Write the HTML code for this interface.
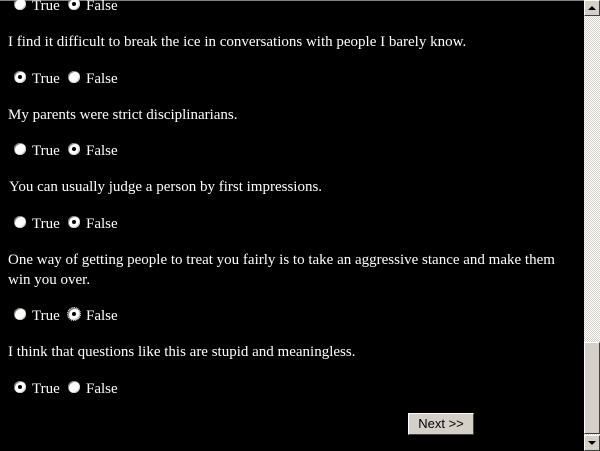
<html><head><style>
body{margin:0;background:#000;width:600px;height:451px;overflow:hidden;position:relative;font-family:"Liberation Serif",serif;font-size:15px;color:#fff}
.t{position:absolute;left:8px;white-space:nowrap;line-height:20px}
.r{position:absolute;width:12px;height:12px;border-radius:50%;background:#fff;box-shadow:inset 1px 1px 0 #808080,inset -1px -1px 0 #d4d0c8}
.r.c::after{content:"";position:absolute;left:4px;top:4px;width:4px;height:4px;border-radius:50%;background:#000}
.l{position:absolute;line-height:16px}
#sb{position:absolute;left:584px;top:0;width:16px;height:451px;background:repeating-conic-gradient(#fff 0 25%,#d4d0c8 0 50%) 0 0/2px 2px}
.btn{position:absolute;background:#d4d0c8;border:1px solid;border-color:#fff #404040 #404040 #fff;box-sizing:border-box}
</style></head><body>
<div style="position:absolute;left:0;top:0;width:584px;height:1px;background:#808080"></div>
<div id="sb">
<div class="btn" style="left:0;top:0;width:16px;height:16px"><div style="position:absolute;left:3px;top:5px;border:4px solid transparent;border-bottom:4px solid #000;border-top:0;width:0"></div></div>
<div class="btn" style="left:0;top:342px;width:16px;height:92px"></div>
<div class="btn" style="left:0;top:435px;width:16px;height:16px"><div style="position:absolute;left:3px;top:5px;border:4px solid transparent;border-top:4px solid #000;border-bottom:0;width:0"></div></div>
</div>

<div class="r" style="left:14px;top:-2px"></div><div class="l" style="left:32px;top:-2px">True</div>
<div class="r c" style="left:68px;top:-2px"></div><div class="l" style="left:86px;top:-2px">False</div>

<div class="t" style="top:32px">I find it difficult to break the ice in conversations with people I barely know.</div>
<div class="r c" style="left:14px;top:71px"></div><div class="l" style="left:32px;top:71px">True</div>
<div class="r" style="left:68px;top:71px"></div><div class="l" style="left:86px;top:71px">False</div>

<div class="t" style="top:105px">My parents were strict disciplinarians.</div>
<div class="r" style="left:14px;top:143px"></div><div class="l" style="left:32px;top:143px">True</div>
<div class="r c" style="left:68px;top:143px"></div><div class="l" style="left:86px;top:143px">False</div>

<div class="t" style="top:177px;left:9px">You can usually judge a person by first impressions.</div>
<div class="r" style="left:14px;top:216px"></div><div class="l" style="left:32px;top:216px">True</div>
<div class="r c" style="left:68px;top:216px"></div><div class="l" style="left:86px;top:216px">False</div>

<div class="t" style="top:250px">One way of getting people to treat you fairly is to take an aggressive stance and make them<br>win you over.</div>
<div class="r" style="left:14px;top:308px"></div><div class="l" style="left:32px;top:308px">True</div>
<div class="r c" style="left:68px;top:308px;outline:1px dotted #fff"></div><div class="l" style="left:86px;top:308px">False</div>

<div class="t" style="top:342px">I think that questions like this are stupid and meaningless.</div>
<div class="r c" style="left:14px;top:381px"></div><div class="l" style="left:32px;top:381px">True</div>
<div class="r" style="left:68px;top:381px"></div><div class="l" style="left:86px;top:381px">False</div>

<div class="btn" style="left:408px;top:413px;width:66px;height:22px;color:#000;font-family:'Liberation Sans',sans-serif;font-size:13px;text-align:center;line-height:20px">Next &gt;&gt;</div>
</body></html>
